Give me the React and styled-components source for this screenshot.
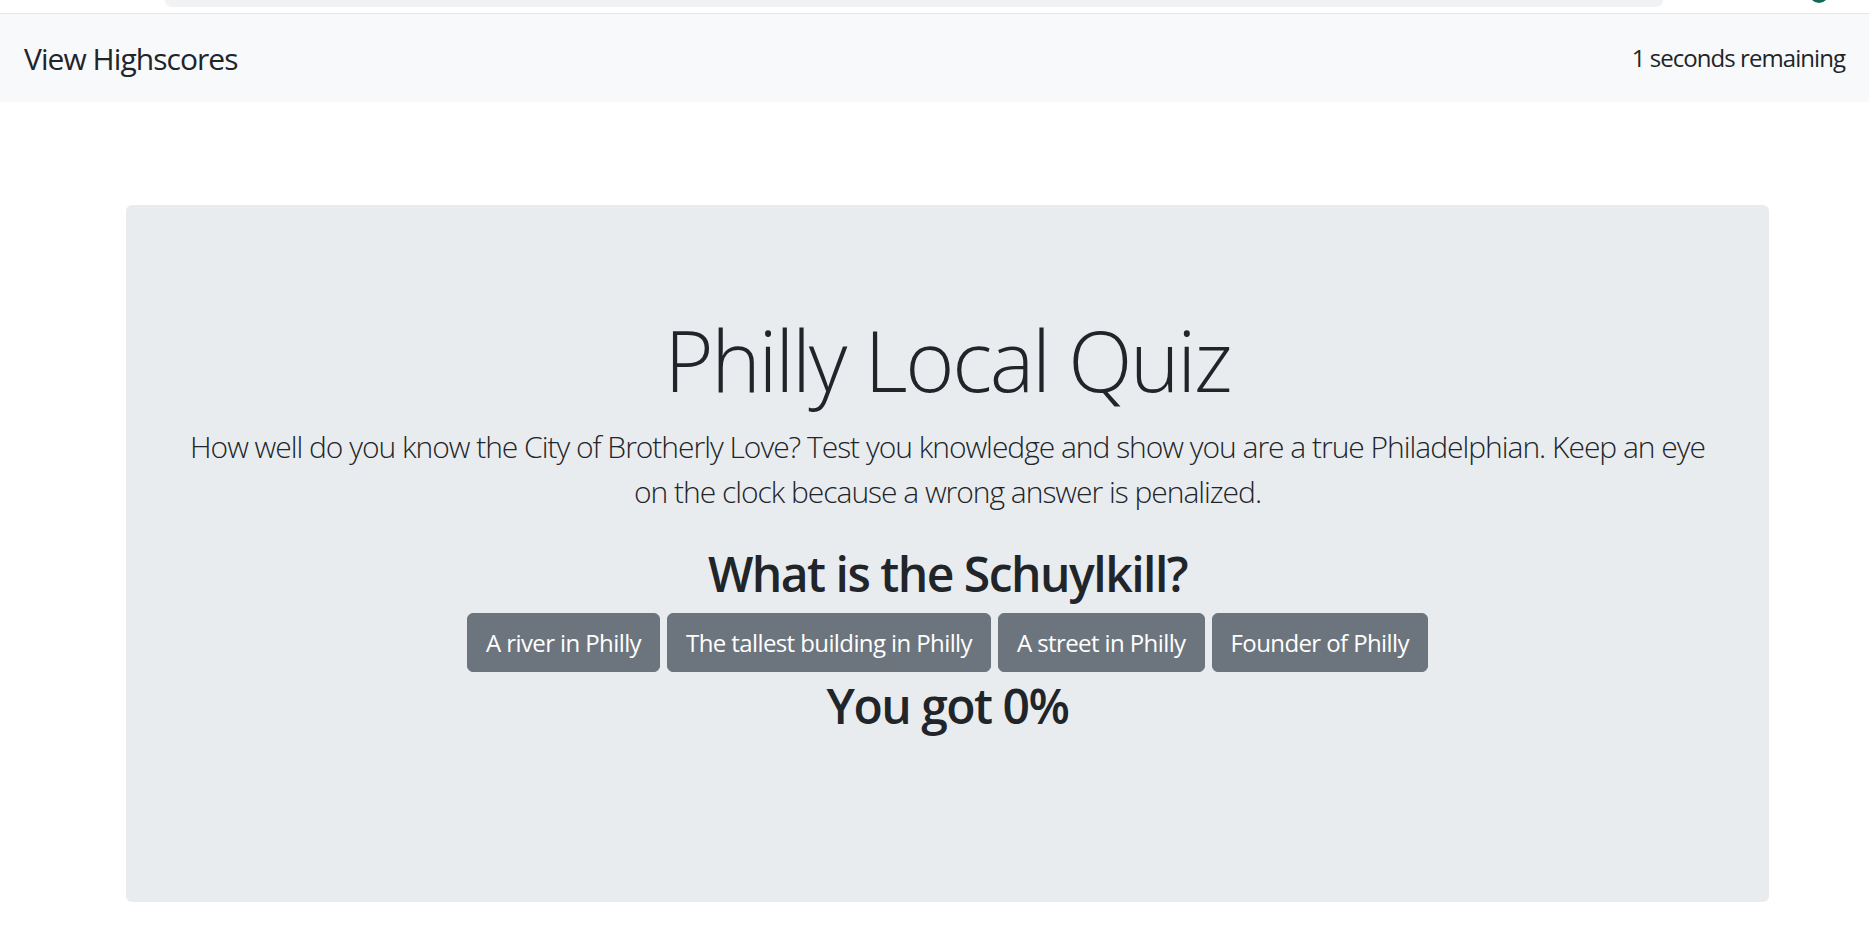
import React from "react";
import styled, { createGlobalStyle } from "styled-components";

const GlobalStyle = createGlobalStyle`
  html, body { margin: 0; padding: 0; background: #ffffff; }
  body {
    font-family: "Open Sans", "Noto Sans", Arial, sans-serif;
    color: #212529;
    -webkit-font-smoothing: antialiased;
  }
  * { box-sizing: border-box; }
`;

const Chrome = styled.div`
  display: flex;
  align-items: flex-start;
  height: 14px;
  border-bottom: 1px solid #e3e4e6;
  overflow: hidden;
  background: #ffffff;
`;

const AddressBar = styled.div`
  margin-left: 165px;
  width: 1498px;
  height: 7px;
  background: #f1f2f4;
  border-radius: 0 0 14px 14px;
`;

const Avatar = styled.div`
  margin-left: auto;
  margin-right: 40px;
  margin-top: -17px;
  width: 20px;
  height: 20px;
  border-radius: 50%;
  background: #0f6b55;
`;

const Navbar = styled.nav`
  display: flex;
  align-items: center;
  justify-content: space-between;
  height: 88px;
  padding: 0 24px;
  background: #f8f9fa;
`;

const Brand = styled.a`
  font-size: 30px;
  line-height: 45px;
  color: #212529;
  text-decoration: none;
  letter-spacing: -0.95px;
  cursor: pointer;
`;

const Timer = styled.span`
  font-size: 24px;
  line-height: 36px;
  color: #212529;
  letter-spacing: -0.95px;
`;

const Main = styled.main`
  padding-top: 103px;
`;

const Jumbotron = styled.section`
  margin-left: 126px;
  width: 1643px;
  height: 697px;
  padding: 105px 48px 0;
  background: #e9ecef;
  border-radius: 6px;
  display: flex;
  flex-direction: column;
  align-items: center;
  text-align: center;
`;

const Title = styled.h1`
  margin: 0 0 14px;
  font-size: 84px;
  line-height: 100px;
  font-weight: 300;
  letter-spacing: -2.3px;
  color: #212529;
`;

const Lead = styled.p`
  margin: 0;
  font-size: 30px;
  line-height: 45px;
  font-weight: 300;
  letter-spacing: -1.02px;
  color: #212529;
`;

const Heading = styled.h2`
  margin: ${(p) => p.$mt}px 0 0;
  font-size: 48px;
  line-height: 58px;
  font-weight: 600;
  letter-spacing: -1.5px;
  color: #212529;
`;

const Answers = styled.div`
  display: flex;
  gap: 7px;
  margin-top: 10px;
`;

const AnswerButton = styled.button`
  font-family: inherit;
  font-size: 24px;
  line-height: 36px;
  font-weight: 400;
  letter-spacing: -0.6px;
  color: #ffffff;
  background: #6c757d;
  border: 1px solid #6c757d;
  border-radius: 6px;
  padding: 11px 18px 10px;
  cursor: pointer;
`;

const answers = [
  "A river in Philly",
  "The tallest building in Philly",
  "A street in Philly",
  "Founder of Philly",
];

export default function App() {
  return (
    <>
      <GlobalStyle />
      <Chrome>
        <AddressBar />
        <Avatar />
      </Chrome>
      <Navbar>
        <Brand>View Highscores</Brand>
        <Timer>1 seconds remaining</Timer>
      </Navbar>
      <Main>
        <Jumbotron>
          <Title>Philly Local Quiz</Title>
          <Lead>
            How well do you know the City of Brotherly Love? Test you knowledge and show you are a true Philadelphian. Keep an eye
            <br />
            on the clock because a wrong answer is penalized.
          </Lead>
          <Heading $mt={31}>What is the Schuylkill?</Heading>
          <Answers>
            {answers.map((a) => (
              <AnswerButton key={a}>{a}</AnswerButton>
            ))}
          </Answers>
          <Heading $mt={5}>You got 0%</Heading>
        </Jumbotron>
      </Main>
    </>
  );
}
